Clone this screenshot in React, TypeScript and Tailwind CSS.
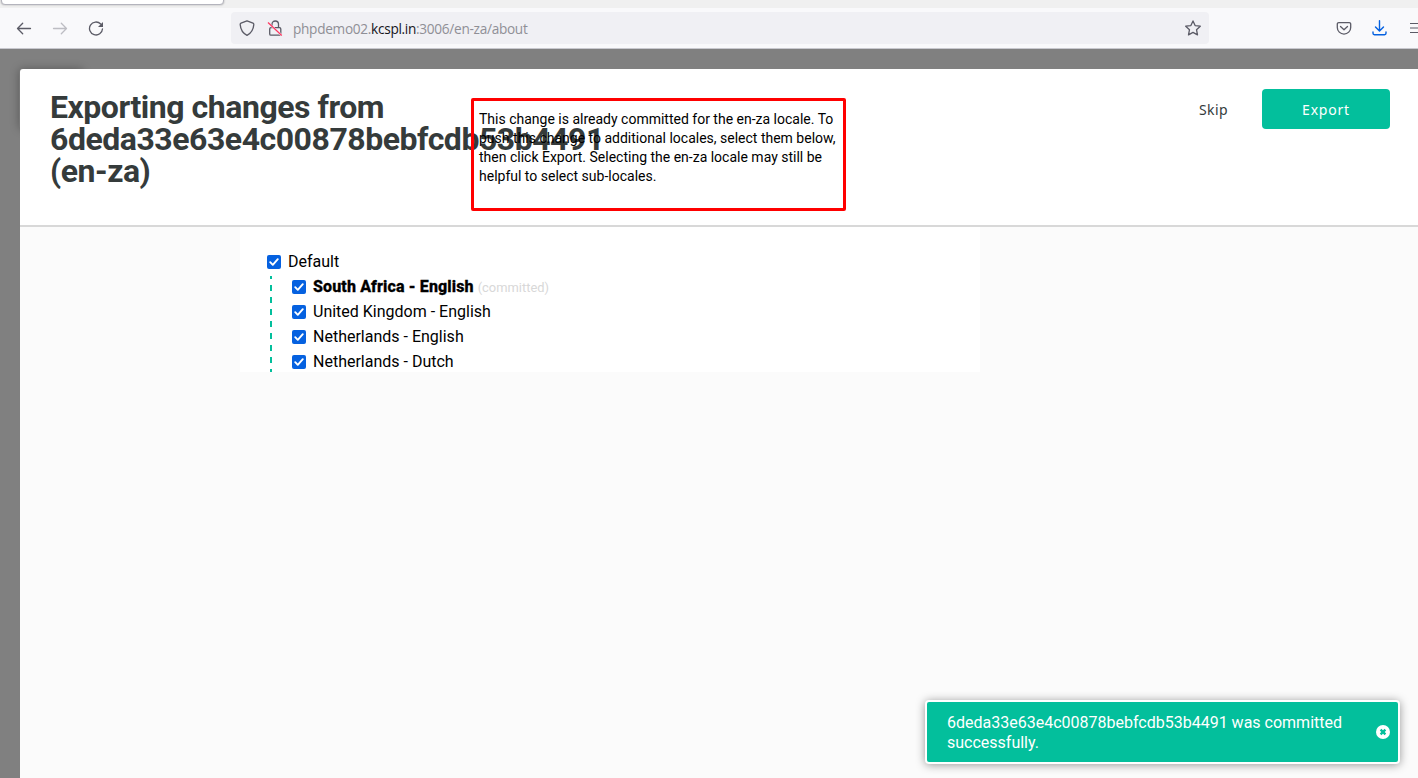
import React from "react";

function BrowserBar() {
  return (
    <header className="h-[49px] shrink-0 bg-[#f9f9fb] border-b border-[#c8c8ce]">
      <div className="h-2 bg-[#f0f0f0] overflow-hidden">
        <div className="-mt-5 ml-px h-[25px] w-[223px] rounded-[4px] border border-[#b4b4bd] bg-white shadow-[0_0_2px_rgba(0,0,0,0.3)]" />
      </div>
      <div className="flex h-10 items-center text-[#5b5b66]">
        <svg className="ml-4 h-4 w-4 shrink-0" viewBox="0 0 16 16" fill="none" stroke="#5b5b66" strokeWidth="1.3" strokeLinecap="round" strokeLinejoin="round">
          <path d="M14.5 8.5H1.5M6.700 3.300 1.500 8.500 6.700 13.700" />
        </svg>
        <svg className="ml-5 h-4 w-4 shrink-0" viewBox="0 0 16 16" fill="none" stroke="#bdbdc3" strokeWidth="1.3" strokeLinecap="round" strokeLinejoin="round">
          <path d="M1.5 8.5H14.5M9.300 3.300l5.200 5.200L9.300 13.700" />
        </svg>
        <svg className="ml-5 h-4 w-4 shrink-0" viewBox="0 0 16 16" fill="none" stroke="#5b5b66" strokeWidth="1.3" strokeLinecap="round">
          <path d="M12.700 4A6.500 6.500 0 1 0 14.500 8.800" />
          <path d="M15 2v5h-5z" fill="#5b5b66" stroke="none" />
        </svg>
        <div className="ml-[127px] flex h-8 w-[978px] shrink-0 items-center rounded-[4px] bg-[#f0f0f4] pl-2 pr-2">
          <svg className="h-4 w-4" viewBox="0 0 16 16" fill="none" stroke="#5b5b66" strokeWidth="1.3" strokeLinejoin="round">
            <path d="M8 .8 14 3.200q.9.400.8 1.400C14.400 9.600 12.500 13 8 15.300 3.500 13 1.600 9.600 1.200 4.600q-.1-1 .8-1.400z" />
          </svg>
          <svg className="ml-3 h-4 w-4" viewBox="0 0 16 16" fill="none">
            <rect x="2.700" y="7.600" width="11.100" height="7.600" rx="1.300" stroke="#5b5b66" strokeWidth="1.300" />
            <path d="M5 7.500V4.200C5 2.200 6.300 1 8.300 1s3.200 1.200 3.200 3.200v3.300" stroke="#5b5b66" strokeWidth="1.300" />
            <path d="M1.200 3 15 15.600" stroke="#f0f0f4" strokeWidth="2" />
            <path d="M1 2.500 14.800 15.500" stroke="#ff3660" strokeWidth="1.200" />
          </svg>
          <span className="ml-[10px] whitespace-nowrap pt-[3px] font-['Open_Sans',sans-serif] text-[13.65px] font-normal tracking-[-0.3px] text-[#8f8f96]">
            phpdemo02.<span className="text-[#15141a]">kcspl.in</span>:3006/en-za/about
          </span>
          <svg className="ml-auto h-4 w-4" viewBox="0 0 16 16" fill="none" stroke="#5b5b66" strokeWidth="1.300" strokeLinejoin="round">
            <path d="m8 .9 2.100 4.700 5.200.6-3.800 3.500 1 5.200L8 12.400l-4.500 2.500 1-5.200L.7 6.200l5.200-.6z" />
          </svg>
        </div>
        <svg className="ml-[127px] h-4 w-4 shrink-0" viewBox="0 0 16 16" fill="none" stroke="#5b5b66" strokeWidth="1.300" strokeLinecap="round" strokeLinejoin="round">
          <path d="M2.800 2.600h10.400a1.500 1.500 0 0 1 1.500 1.500v3.300a6.700 6.700 0 0 1-13.400 0V4.100a1.500 1.500 0 0 1 1.500-1.500zM4.500 6.500 8 9.700l3.500-3.200" />
        </svg>
        <svg className="ml-[19px] h-4 w-4 shrink-0" viewBox="0 0 16 16" fill="none" stroke="#0561e0" strokeWidth="1.400" strokeLinecap="round" strokeLinejoin="round">
          <path d="M8.500.7v10.200M4.500 7l4 4.100 4-4.100M2 12v1.300c0 .9.500 1.400 1.400 1.400h10.200c.9 0 1.400-.5 1.400-1.400V12" />
        </svg>
        <svg className="ml-[22px] h-4 w-[9px] shrink-0" viewBox="0 0 9 16" fill="none" stroke="#5b5b66" strokeWidth="1.200">
          <path d="M1 3.500h8M1 8h8M1 12.500h8" />
        </svg>
      </div>
    </header>
  );
}

function CheckBox() {
  return (
    <svg role="checkbox" aria-checked="true" className="h-[14px] w-[14px] shrink-0" viewBox="0 0 14 14" fill="none">
      <rect width="14" height="14" rx="2" fill="#0561e0" />
      <path d="m3.200 7.200 2.600 2.600 5-5.600" stroke="#fff" strokeWidth="1.900" strokeLinecap="round" strokeLinejoin="round" />
    </svg>
  );
}

function LocaleRow({ name, committed }: { name: string; committed?: boolean }) {
  return (
    <li className="flex h-[25px] items-center gap-[7px]">
      <CheckBox />
      <span className="whitespace-nowrap">
        {committed ? <b className="font-extrabold tracking-[0.13px] [-webkit-text-stroke:0.3px_black]">{name}</b> : name}
        {committed && <span className="ml-1 text-[12.900px] text-[#d8d8d8]">(committed)</span>}
      </span>
    </li>
  );
}

export default function App() {
  return (
    <div className="relative flex h-[778px] w-[1418px] flex-col overflow-hidden bg-[#808080] font-[Roboto,sans-serif] text-black">
      <BrowserBar />
      <main className="relative ml-5 mt-5 flex flex-1 flex-col rounded-tl-[3px] bg-[#fbfbfb]">
        <div className="absolute -left-px top-0 -z-0 h-[60px] w-[64px] rounded-[3px] bg-[#777777] shadow-[0_0_10px_rgba(0,0,0,0.3)]" />
        <section className="relative flex h-[158px] shrink-0 items-start rounded-tl-[3px] border-b-2 border-[#d8d8d8] bg-white">
          <h1 className="ml-[30px] mt-[22px] w-[421px] shrink-0 text-[32px] font-bold leading-8 tracking-[-0.47px] text-[#353b3b]">
            Exporting changes from 6deda33e63e4c00878bebfcdb53b4491 (en-za)
          </h1>
          <p className="relative ml-2 mt-[41px] whitespace-nowrap text-[14px] leading-[19px]">
            This change is already committed for the en-za locale. To<br />
            push this change to additional locales, select them below,<br />
            then click Export. Selecting the en-za locale may still be<br />
            helpful to select sub-locales.
          </p>
          <div className="ml-auto mr-7 mt-5 flex h-10 items-center font-['Noto_Sans',sans-serif] text-[14px] tracking-[0.4px]">
            <button className="mr-[34px] text-[#353b3b]">Skip</button>
            <button className="h-10 w-32 rounded-[4px] bg-[#03bf9c] tracking-[0.800px] text-white">Export</button>
          </div>
        </section>
        <section className="ml-[220px] h-[145px] w-[740px] overflow-hidden bg-white pl-[27px] pt-[22px] text-[16px]">
          <ul>
            <LocaleRow name="Default" />
          </ul>
          <div className="ml-[3px] flex">
            <div className="mt-[2px] h-24 w-[2px] bg-[repeating-linear-gradient(to_bottom,#03bf9c_0px,#03bf9c_3px,transparent_3px,transparent_9px,#03bf9c_9px,#03bf9c_12px)]" />
            <ul className="ml-5">
              <LocaleRow name="South Africa - English" committed />
              <LocaleRow name="United Kingdom - English" />
              <LocaleRow name="Netherlands - English" />
              <LocaleRow name="Netherlands - Dutch" />
            </ul>
          </div>
        </section>
      </main>
      <div className="absolute left-[471px] top-[98px] h-[113px] w-[375px] rounded-[2px] border-3 border-[#ff0000]" />
      <aside className="absolute left-[925px] top-[700px] flex h-16 w-[475px] items-center rounded-[4px] border-2 border-white bg-[#03bf9c] pl-5 pr-2 text-[16px] leading-5 text-white shadow-[0_1px_10px_rgba(0,0,0,0.4)]">
        <p className="whitespace-nowrap pt-[2px]">
          6deda33e63e4c00878bebfcdb53b4491 was committed<br />successfully.
        </p>
        <svg className="ml-auto h-[14px] w-[14px]" viewBox="0 0 14 14">
          <circle cx="7" cy="7" r="7" fill="#fff" />
          <path d="m4.600 4.600 4.800 4.800m0-4.800L4.600 9.400" stroke="#03bf9c" strokeWidth="2.300" />
        </svg>
      </aside>
    </div>
  );
}
